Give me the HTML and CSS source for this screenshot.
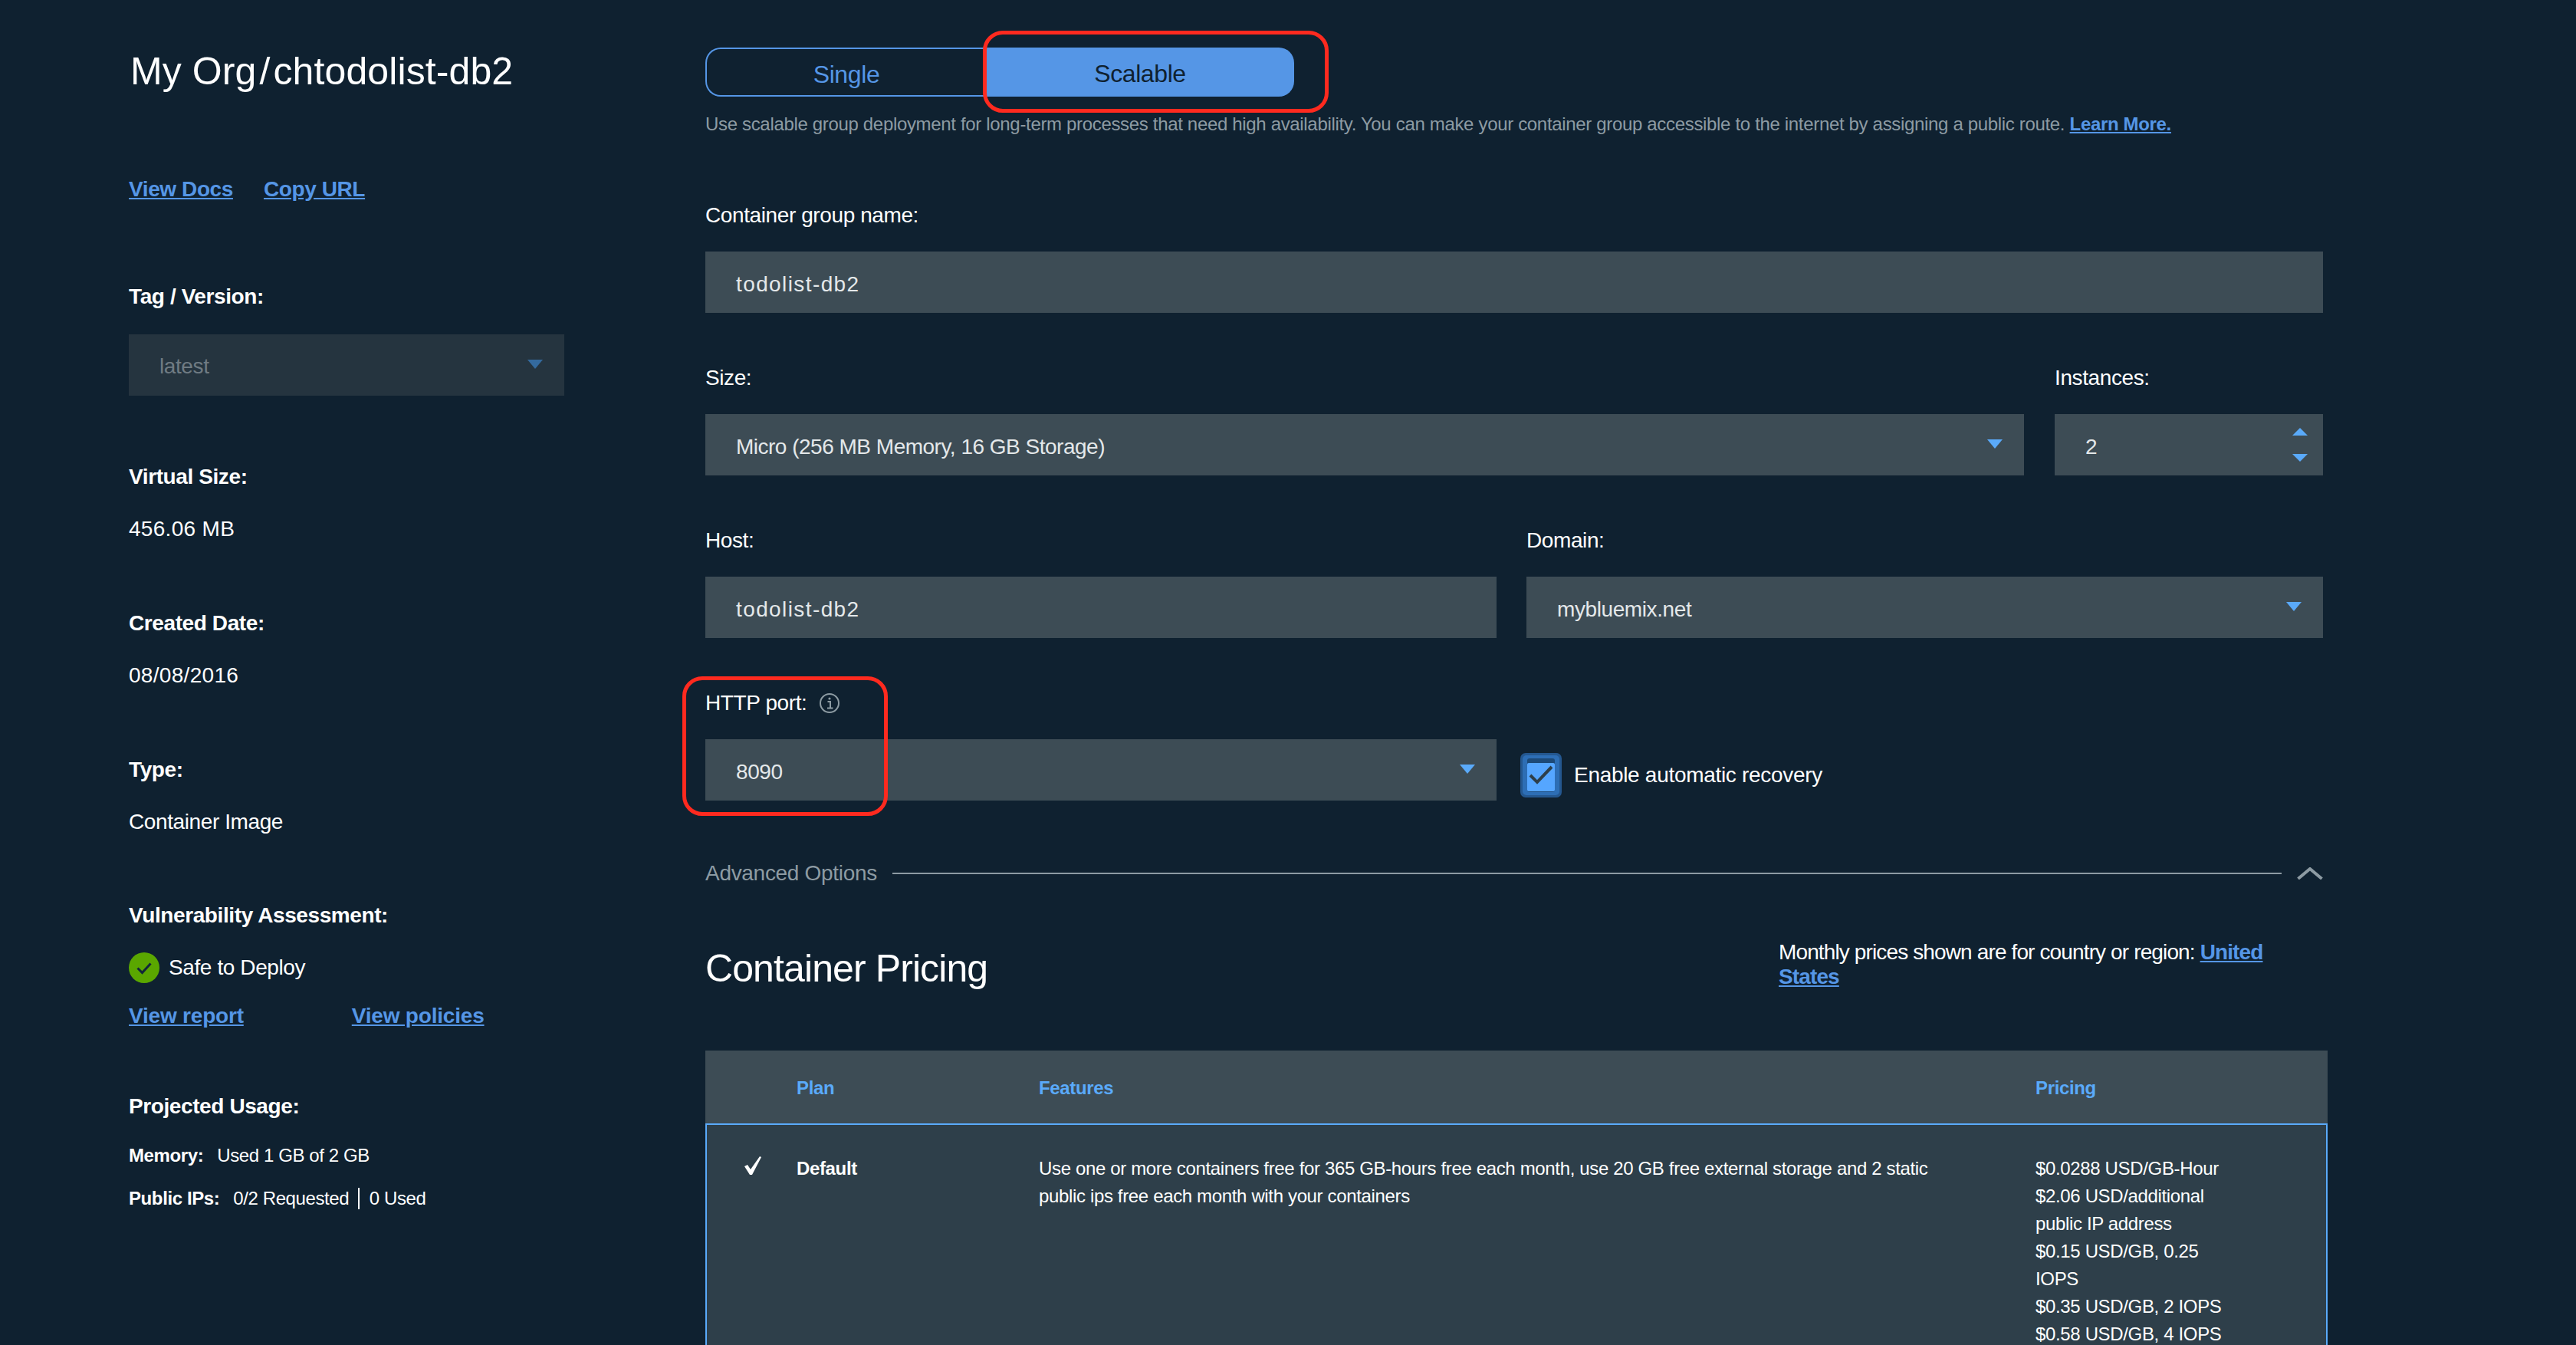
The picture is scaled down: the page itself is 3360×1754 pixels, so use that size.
FILE: index.html
```html
<!DOCTYPE html>
<html lang="en">
<head>
  <meta charset="UTF-8">
  <meta name="viewport" content="width=device-width, initial-scale=1.0">
  <title>Create Container Group</title>
  <link rel="stylesheet" href="styles.css">
</head>
<body>

<div class="page">
  <aside class="sidebar">
    <h1 class="title">My Org<span class="title-sep">/</span>chtodolist-db2</h1>
    <div class="doc-links">
      <a href="#">View Docs</a>
      <a href="#">Copy URL</a>
    </div>

    <div class="label tag-label">Tag / Version:</div>
    <div class="field-box disabled tag-select">
      <span>latest</span>
      <span class="caret"></span>
    </div>

    <div class="label virtual-label">Virtual Size:</div>
    <div class="value num">456.06 MB</div>

    <div class="label info-label">Created Date:</div>
    <div class="value num">08/08/2016</div>

    <div class="label info-label">Type:</div>
    <div class="value">Container Image</div>

    <div class="label vuln-label">Vulnerability Assessment:</div>
    <div class="safe">
      <svg class="safe-icon" viewBox="0 0 40 40" width="40" height="40">
        <circle cx="20" cy="20" r="20" fill="#5aa700"/>
        <path d="M11.5 20.5l6 6 11-12" fill="none" stroke="#12273a" stroke-width="3"/>
      </svg>
      <span>Safe to Deploy</span>
    </div>
    <div class="report-links">
      <a href="#">View report</a>
      <a href="#">View policies</a>
    </div>

    <div class="label usage-label">Projected Usage:</div>
    <div class="usage-row"><b>Memory:</b><span>Used 1 GB of 2 GB</span></div>
    <div class="usage-row"><b>Public IPs:</b><span>0/2 Requested <i class="pipe"></i> 0 Used</span></div>
  </aside>

  <main class="main">
    <div class="switch">
      <div class="switch-item">Single</div>
      <div class="switch-item active">Scalable</div>
    </div>
    <p class="help">Use scalable group deployment for long-term processes that need high availability. You can make your container group accessible to the internet by assigning a public route. <a href="#">Learn More.</a></p>

    <div class="field name-field">
      <div class="label">Container group name:</div>
      <div class="field-box spaced">todolist-db2</div>
    </div>

    <div class="field-row size-row">
      <div class="field">
        <div class="label">Size:</div>
        <div class="field-box tight">
          <span>Micro (256 MB Memory, 16 GB Storage)</span>
          <span class="caret"></span>
        </div>
      </div>
      <div class="field">
        <div class="label">Instances:</div>
        <div class="field-box">
          <span>2</span>
          <span class="spinner">
            <span class="caret up"></span>
            <span class="caret"></span>
          </span>
        </div>
      </div>
    </div>

    <div class="field-row host-row">
      <div class="field">
        <div class="label">Host:</div>
        <div class="field-box spaced">todolist-db2</div>
      </div>
      <div class="field">
        <div class="label">Domain:</div>
        <div class="field-box">
          <span>mybluemix.net</span>
          <span class="caret"></span>
        </div>
      </div>
    </div>

    <div class="field-row host-row">
      <div class="field">
        <div class="label port-label">
          HTTP port:
          <svg viewBox="0 0 28 28" width="28" height="28">
            <circle cx="14" cy="14" r="12" fill="none" stroke="#8d9ba3" stroke-width="2"/>
            <path d="M11.5 12h3.5v8M11 20.5h7.5" fill="none" stroke="#8d9ba3" stroke-width="2"/>
            <circle cx="14" cy="8" r="1.6" fill="#8d9ba3"/>
          </svg>
        </div>
        <div class="field-box">
          <span>8090</span>
          <span class="caret"></span>
        </div>
      </div>
      <div class="recovery">
        <svg viewBox="0 0 54 58" width="54" height="58">
          <rect width="54" height="58" rx="7" fill="#24578f"/>
          <rect x="3" y="3" width="48" height="52" rx="5" fill="#2d6eb5"/>
          <rect x="9" y="7" width="36" height="44" rx="3" fill="#1d4a78"/>
          <rect x="9" y="13" width="36" height="37" rx="2" fill="#55a6ff"/>
          <path d="M13 29l9 9 19-20" fill="none" stroke="#2e3f4a" stroke-width="4"/>
        </svg>
        <span>Enable automatic recovery</span>
      </div>
    </div>

    <div class="advanced">
      <span>Advanced Options</span>
      <span class="advanced-line"></span>
      <svg viewBox="0 0 34 16" width="34" height="16">
        <path d="M1.5 15L17 2l15.5 13" fill="none" stroke="#8d9ba3" stroke-width="4"/>
      </svg>
    </div>

    <div class="pricing-head">
      <h2>Container Pricing</h2>
      <p>Monthly prices shown are for country or region: <a href="#">United</a> <a href="#">States</a></p>
    </div>

    <table class="plans">
      <thead>
        <tr>
          <th class="col-check"></th>
          <th class="col-plan">Plan</th>
          <th class="col-features">Features</th>
          <th class="col-price">Pricing</th>
        </tr>
      </thead>
      <tbody>
        <tr>
          <td class="check-cell">
            <svg viewBox="0 0 22 24" width="22" height="24">
              <path d="M0 13l4-2 4 6L20 0l2 1L10 24H7z" fill="#fff"/>
            </svg>
          </td>
          <td class="plan-name">Default</td>
          <td><div class="features">Use one or more containers free for 365 GB-hours free each month, use 20 GB free external storage and 2 static public ips free each month with your containers</div></td>
          <td class="price-cell">
            <div class="prices">
              $0.0288 USD/GB-Hour<br>
              $2.06 USD/additional public IP address<br>
              $0.15 USD/GB, 0.25 IOPS<br>
              $0.35 USD/GB, 2 IOPS<br>
              $0.58 USD/GB, 4 IOPS
            </div>
          </td>
        </tr>
      </tbody>
    </table>
  </main>

  <!-- red annotation boxes -->
  <div class="mark mark-scalable"></div>
  <div class="mark mark-port"></div>
</div>

</body>
</html>
```

FILE: styles.css
```css
html, body {
  margin: 0;
  height: 1754px;
  overflow: hidden;
  background-color: #0f2130;
}
body {
  font-family: "Liberation Sans", Arial, sans-serif;
  font-size: 28px;
  line-height: 32px;
  color: #fff;
  letter-spacing: -0.4px;
}
a {
  color: #5596e6;
  font-weight: bold;
}
p, h1, h2 {
  margin: 0;
}

.page {
  position: relative;
  display: flex;
  height: 1754px;
}

/* left column */
.sidebar {
  width: 568px;
  margin-left: 168px;
  margin-right: 184px;
  padding-top: 63px;
  flex-shrink: 0;
}
.title {
  font-size: 50px;
  line-height: 60px;
  font-weight: normal;
  padding-left: 2px;
  letter-spacing: 0.1px;
}
.title-sep {
  margin: 0 4px;
}
.doc-links {
  display: flex;
  gap: 40px;
  margin-top: 108px;
}
.sidebar .label {
  font-weight: bold;
}
.tag-label {
  margin-top: 108px;
}
.tag-select {
  margin-top: 33px;
}
.virtual-label {
  margin-top: 90px;
}
.info-label {
  margin-top: 91px;
}
.value {
  margin-top: 36px;
}
.value.num {
  letter-spacing: 0.3px;
}
.vuln-label {
  margin-top: 90px;
}
.safe {
  display: flex;
  align-items: center;
  gap: 12px;
  margin-top: 32px;
}
.report-links {
  display: flex;
  gap: 141px;
  margin-top: 27px;
  letter-spacing: -0.2px;
}
.usage-label {
  margin-top: 86px;
}
.usage-row {
  display: flex;
  gap: 18px;
  font-size: 24px;
  margin-top: 24px;
  letter-spacing: -0.4px;
}
.usage-label + .usage-row {
  margin-top: 32px;
}
.pipe {
  display: inline-block;
  width: 2px;
  height: 28px;
  margin: 0 6px;
  background-color: #fff;
  vertical-align: -6px;
}

/* form boxes */
.field-box {
  display: flex;
  align-items: center;
  justify-content: space-between;
  box-sizing: border-box;
  height: 80px;
  padding: 5px 28px 0 40px;
  background-color: #3d4c55;
  color: #e4e8ea;
}
.field-box.spaced {
  letter-spacing: 1.4px;
}
.field-box.tight {
  letter-spacing: -0.5px;
}
.field-box.disabled {
  background-color: #25343f;
  color: #6f7b83;
  padding-top: 4px;
}
.caret {
  width: 0;
  height: 0;
  margin-top: -7px;
  border-left: 10.5px solid transparent;
  border-right: 10.5px solid transparent;
  border-top: 12px solid #5aaafa;
}
.disabled .caret {
  border-top-color: #346a9e;
}
.caret.up {
  border-top: 0;
  border-bottom: 10px solid #5aaafa;
}
.spinner {
  display: flex;
  flex-direction: column;
  gap: 24px;
  margin: -5px -8px 0 0;
}
.spinner .caret {
  margin-top: 0;
  border-left-width: 10px;
  border-right-width: 10px;
  border-top-width: 10px;
}
.spinner .caret.up {
  border-top-width: 0;
}

/* right column */
.main {
  width: 2110px;
  padding-top: 62px;
  flex-shrink: 0;
}
.switch {
  display: flex;
  width: 768px;
  height: 64px;
  box-sizing: border-box;
  font-size: 32px;
  text-align: center;
}
.switch-item {
  width: 366px;
  box-sizing: border-box;
  border: 2px solid #5596e6;
  border-right: 0;
  border-radius: 20px 0 0 20px;
  line-height: 66px;
  color: #5596e6;
}
.switch-item.active {
  width: 402px;
  border: 0;
  border-radius: 0 20px 20px 0;
  background-color: #5596e6;
  line-height: 68px;
  color: #0f2130;
}
.help {
  margin-top: 20px;
  font-size: 24px;
  color: #8d9ba3;
  letter-spacing: -0.33px;
}
.name-field {
  margin-top: 85px;
}
.field .label {
  padding-top: 2px;
  margin-bottom: 31px;
}
.field-row {
  display: grid;
  margin-top: 67px;
}
.size-row {
  grid-template-columns: 1720px 350px;
  column-gap: 40px;
}
.host-row {
  grid-template-columns: 1032px 1039px;
  column-gap: 39px;
}
.port-label {
  display: flex;
  align-items: center;
  gap: 16px;
}
.recovery {
  display: flex;
  align-items: center;
  gap: 16px;
  padding-top: 78px;
  margin-left: -8px;
  letter-spacing: -0.3px;
}
.advanced {
  display: flex;
  align-items: center;
  gap: 20px;
  margin-top: 79px;
  color: #8d9ba3;
  letter-spacing: -0.3px;
}
.advanced-line {
  flex: 1;
  height: 2px;
  background-color: #8d9ba3;
}
.pricing-head {
  display: flex;
  justify-content: space-between;
  margin-top: 71px;
}
.pricing-head h2 {
  padding-top: 7px;
  font-size: 50px;
  line-height: 60px;
  font-weight: normal;
  letter-spacing: -0.9px;
}
.pricing-head p {
  width: 710px;
  box-sizing: border-box;
  padding-right: 60px;
  letter-spacing: -0.87px;
}

/* plan table */
.plans {
  width: 2116px;
  margin-top: 77px;
  table-layout: fixed;
  border-collapse: separate;
  border-spacing: 0;
  font-size: 24px;
  line-height: 36px;
  letter-spacing: -0.35px;
}
.plans th {
  height: 95px;
  padding: 0;
  padding-top: 2px;
  box-sizing: border-box;
  background-color: #3d4c55;
  color: #5aaafa;
  text-align: left;
}
.plans td {
  padding: 39px 0 0;
  height: 400px;
  box-sizing: border-box;
  vertical-align: top;
  background-color: #2e3f4a;
  border-top: 2px solid #5aaafa;
}
.col-check { width: 119px; }
.col-plan { width: 316px; }
.col-features { width: 1300px; }
.col-price { width: 381px; }
.plans .check-cell {
  padding-left: 49px;
  border-left: 2px solid #5aaafa;
}
.plans .plan-name {
  font-weight: bold;
}
.features {
  width: 1200px;
}
.plans .price-cell {
  border-right: 2px solid #5aaafa;
}
.prices {
  width: 256px;
}

/* annotation boxes drawn over the form */
.mark {
  position: absolute;
  box-sizing: border-box;
  border: 5px solid #ff2a1f;
  border-radius: 26px;
}
.mark-scalable {
  left: 1282px;
  top: 40px;
  width: 451px;
  height: 107px;
}
.mark-port {
  left: 890px;
  top: 882px;
  width: 268px;
  height: 182px;
}
```
